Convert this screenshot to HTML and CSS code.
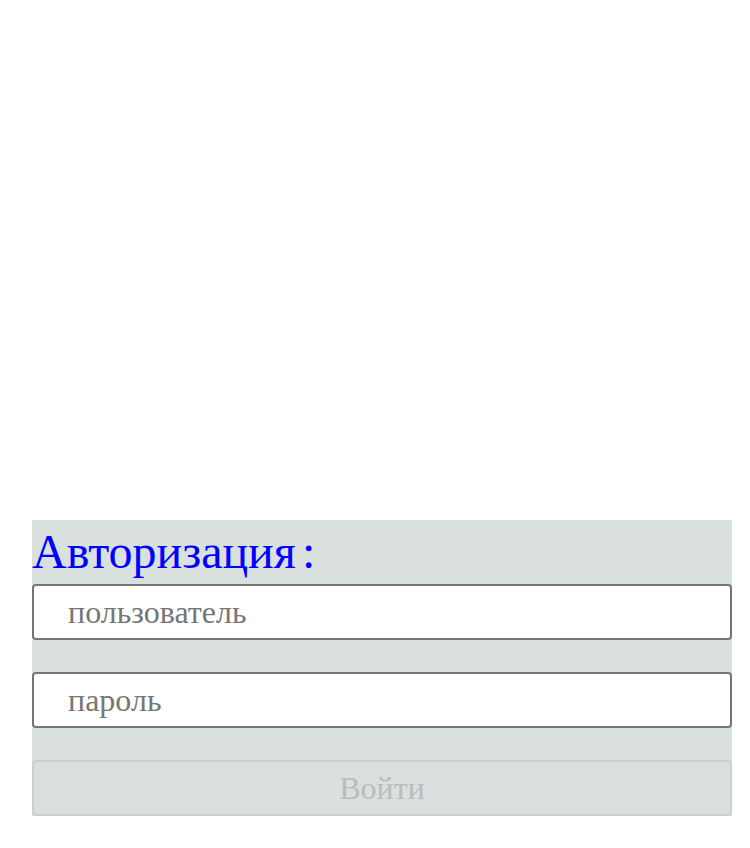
FILE: index.html
```html
<!DOCTYPE html>
<html lang="ru">
<head>
<meta charset="utf-8">
<link rel="stylesheet" href="styles.css">
</head>
<body>
<div class="page">
  <form class="panel">
    <div class="title">Авторизация<span class="colon">:</span></div>
    <input class="field" type="text" placeholder="пользователь">
    <input class="field" type="password" placeholder="пароль">
    <button class="btn" type="button" disabled>Войти</button>
  </form>
</div>
</body>
</html>
```
FILE: styles.css
```css
html, body {
  margin: 0;
  padding: 0;
  background: #ffffff;
}
.page {
  padding: 520px 18px 0 32px;
}
.panel {
  width: 700px;
  background: #dae0dd;
  display: flex;
  flex-direction: column;
  gap: 32px;
  margin: 0;
  font-family: "Liberation Serif", "Times New Roman", serif;
}
.title {
  color: #0000ff;
  font-size: 48px;
  line-height: 64px;
  height: 64px;
  margin-bottom: -32px;
}
.colon {
  margin-left: 6px;
}
.field {
  box-sizing: border-box;
  width: 700px;
  height: 56px;
  margin: 0;
  padding: 0 0 0 34px;
  border: 2px solid #757575;
  border-radius: 4px;
  background: #ffffff;
  font-family: "Liberation Serif", "Times New Roman", serif;
  font-size: 32px;
  color: #333;
  outline: none;
}
.field::placeholder {
  color: #767676;
  opacity: 1;
}
.btn {
  box-sizing: border-box;
  width: 700px;
  height: 56px;
  margin: 0;
  padding: 0;
  border: 2px solid #cbd0cd;
  border-radius: 4px;
  background: #dae0dd;
  font-family: "Liberation Serif", "Times New Roman", serif;
  font-size: 32px;
  color: #b9bdbb;
}
```
